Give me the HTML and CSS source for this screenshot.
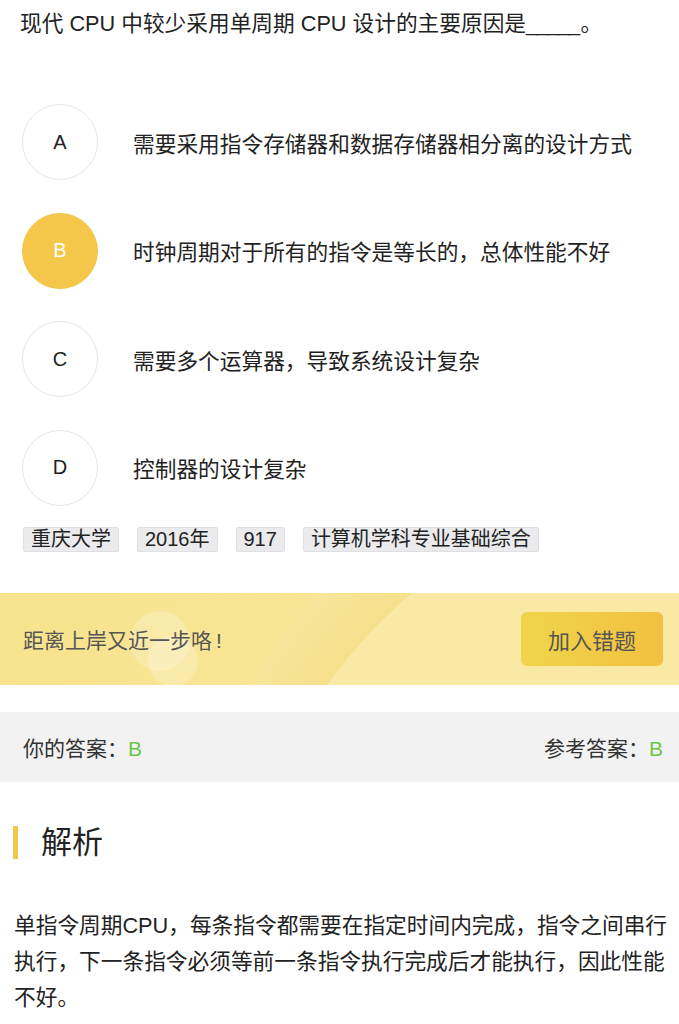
FILE: index.html
```html
<!DOCTYPE html>
<html lang="zh-CN">
<head>
    <meta charset="UTF-8">
    <meta name="viewport" content="width=device-width, initial-scale=1.0">
    <title>题目解析</title>
    <link rel="stylesheet" href="styles.css">
</head>
<body>
    <div class="question">现代 CPU 中较少采用单周期 CPU 设计的主要原因是<span class="blank">_____</span>。</div>

    <ul class="options">
        <li class="option">
            <span class="letter">A</span>
            <span class="option-text">需要采用指令存储器和数据存储器相分离的设计方式</span>
        </li>
        <li class="option">
            <span class="letter selected">B</span>
            <span class="option-text">时钟周期对于所有的指令是等长的，总体性能不好</span>
        </li>
        <li class="option">
            <span class="letter">C</span>
            <span class="option-text">需要多个运算器，导致系统设计复杂</span>
        </li>
        <li class="option">
            <span class="letter">D</span>
            <span class="option-text">控制器的设计复杂</span>
        </li>
    </ul>

    <div class="tags">
        <span class="tag">重庆大学</span>
        <span class="tag">2016年</span>
        <span class="tag">917</span>
        <span class="tag">计算机学科专业基础综合</span>
    </div>

    <div class="banner">
        <span class="deco ring"></span>
        <span class="deco bubble one"></span>
        <span class="deco bubble two"></span>
        <span class="banner-text">距离上岸又近一步咯<span class="bang">!</span></span>
        <button class="add-btn">加入错题</button>
    </div>

    <div class="answer-bar">
        <span>你的答案：<em class="ok">B</em></span>
        <span>参考答案：<em class="ok">B</em></span>
    </div>

    <h2 class="section-title">解析</h2>

    <p class="analysis">单指令周期CPU，每条指令都需要在指定时间内完成，指令之间串行执行，下一条指令必须等前一条指令执行完成后才能执行，因此性能不好。</p>
</body>
</html>
```

FILE: styles.css
```css
body {
    margin: 0;
    font-family: "Liberation Sans", "Noto Sans CJK SC", sans-serif;
    color: #222;
    background: #fff;
}

.question {
    padding: 7px 20px 0;
    font-size: 21.7px;
    line-height: 33px;
}
.blank {
    letter-spacing: -1.6px;
    margin-right: 2px;
}

.options {
    list-style: none;
    margin: 48px 0 0;
    padding: 0 0 0 22px;
}
.option {
    display: flex;
    align-items: center;
    height: 108.5px;
}
.letter {
    width: 74px;
    height: 74px;
    border: 1px solid #e6e6e6;
    border-radius: 50%;
    display: flex;
    justify-content: center;
    align-items: center;
    font-size: 20px;
    flex-shrink: 0;
}
.letter.selected {
    background: #f4c74a;
    border-color: #f4c74a;
    color: #fff;
}
.option-text {
    margin-left: 35px;
    font-size: 21.7px;
}

.tags {
    display: flex;
    gap: 18px;
    padding: 0 23px;
    margin-top: 5px;
}
.tag {
    background: #ebebed;
    border: 1px solid #e0e0e2;
    border-radius: 2px;
    padding: 0 7px;
    font-size: 20px;
    line-height: 23px;
}

.banner {
    position: relative;
    overflow: hidden;
    margin-top: 41px;
    height: 92px;
    padding: 0 16px 0 23px;
    display: flex;
    justify-content: space-between;
    align-items: center;
    background: linear-gradient(90deg, #f8e38e, #f9e79c);
}
.deco {
    position: absolute;
    border-radius: 50%;
}
.ring {
    left: 160px;
    top: -193px;
    width: 1200px;
    height: 1200px;
    background: radial-gradient(circle, #f9e9a4 0, #f9e9a4 535px, #f7e08c 536px, #f8e59a 600px);
}
.bubble {
    background: rgba(255, 255, 255, 0.22);
}
.bubble.one {
    left: 130px;
    top: 18px;
    width: 60px;
    height: 60px;
}
.bubble.two {
    left: 148px;
    top: 43px;
    width: 50px;
    height: 50px;
}
.banner-text {
    position: relative;
    font-size: 21px;
    color: #555;
}
.bang {
    margin-left: 4px;
}
.add-btn {
    position: relative;
    width: 142px;
    height: 54px;
    border: 0;
    border-radius: 6px;
    background: linear-gradient(90deg, #f0d54b, #f2c03f);
    font-family: inherit;
    font-size: 22px;
    color: #555;
}

.answer-bar {
    margin-top: 27px;
    height: 70px;
    padding: 0 16px 0 23px;
    background: #f2f2f2;
    display: flex;
    justify-content: space-between;
    align-items: center;
    font-size: 21px;
    color: #333;
}
.ok {
    font-style: normal;
    color: #6cc644;
}

.section-title {
    margin: 44px 0 0 13px;
    padding-left: 23px;
    border-left: 5px solid #f4c74a;
    height: 33px;
    line-height: 33px;
    font-size: 31px;
    font-weight: normal;
    color: #222;
}

.analysis {
    margin: 49px 10px 0 14px;
    font-size: 21.7px;
    line-height: 36px;
    color: #222;
}
```
